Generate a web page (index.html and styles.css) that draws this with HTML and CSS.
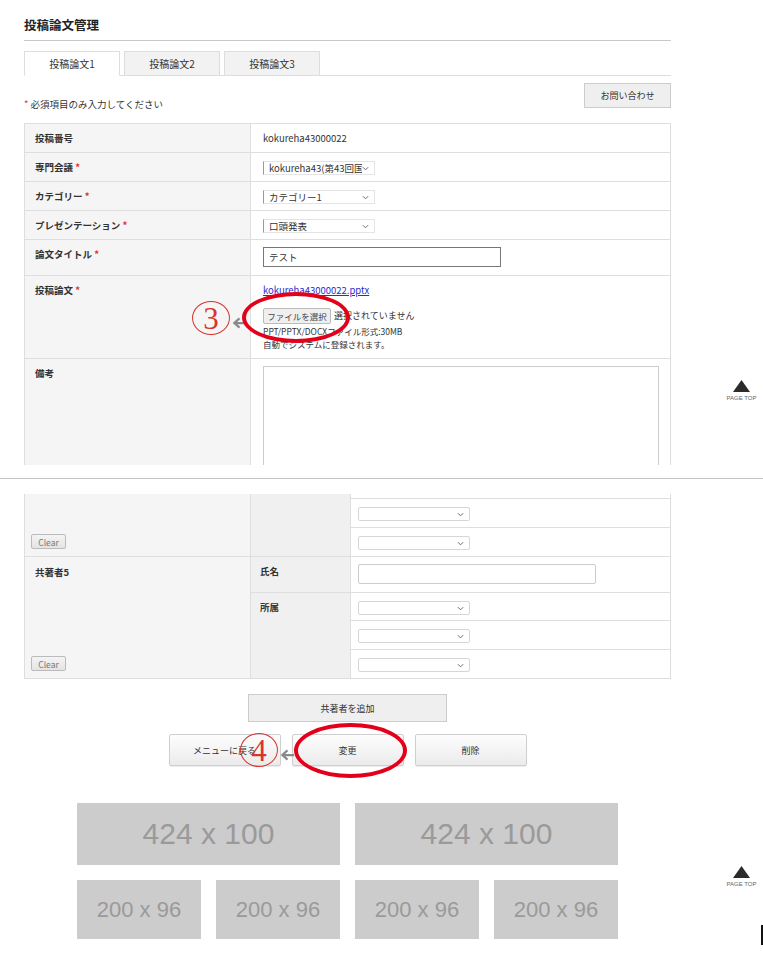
FILE: index.html
```html
<!DOCTYPE html>
<html lang="ja">
<head>
  <meta charset="UTF-8">
  <meta name="viewport" content="width=device-width, initial-scale=1.0">
  <title>投稿論文管理</title>
  <link rel="stylesheet" href="styles.css">
</head>
<body>
  <!-- Screenshot 1: top of the form -->
  <section class="shot shot-top">
    <div class="page">
      <h1>投稿論文管理</h1>

      <ul class="tabs">
        <li class="tab active">投稿論文1</li>
        <li class="tab">投稿論文2</li>
        <li class="tab">投稿論文3</li>
      </ul>

      <div class="form-head">
        <p class="note"><span class="req">*</span> 必須項目のみ入力してください</p>
        <button class="btn btn-contact">お問い合わせ</button>
      </div>

      <div class="form-grid">
        <div class="label">投稿番号</div>
        <div class="value">kokureha43000022</div>

        <div class="label">専門会議 <span class="req">*</span></div>
        <div class="value">
          <span class="select select-top"><span class="select-text">kokureha43(第43回国際</span><svg class="caret" viewBox="0 0 8 5"><path d="M1 1l3 3 3-3"/></svg></span>
        </div>

        <div class="label">カテゴリー <span class="req">*</span></div>
        <div class="value">
          <span class="select select-top"><span class="select-text">カテゴリー1</span><svg class="caret" viewBox="0 0 8 5"><path d="M1 1l3 3 3-3"/></svg></span>
        </div>

        <div class="label">プレゼンテーション <span class="req">*</span></div>
        <div class="value">
          <span class="select select-top"><span class="select-text">口頭発表</span><svg class="caret" viewBox="0 0 8 5"><path d="M1 1l3 3 3-3"/></svg></span>
        </div>

        <div class="label">論文タイトル <span class="req">*</span></div>
        <div class="value value-input">
          <input class="text-input" type="text" value="テスト">
        </div>

        <div class="label">投稿論文 <span class="req">*</span></div>
        <div class="value">
          <a class="file-link" href="#">kokureha43000022.pptx</a>
          <div class="file-row">
            <button class="btn btn-file">ファイルを選択</button>
            <span>選択されていません</span>
          </div>
          <p class="hint">PPT/PPTX/DOCXファイル形式:30MB</p>
          <p class="hint">自動でシステムに登録されます。</p>
        </div>

        <div class="label">備考</div>
        <div class="value value-input">
          <textarea class="memo"></textarea>
        </div>
      </div>
    </div>

    <a class="page-top page-top-1" href="#">
      <svg viewBox="0 0 17 12"><path d="M8.5 0L17 12H0z"/></svg>
      <span>PAGE TOP</span>
    </a>

    <div class="callout callout-3">
      <span class="circled">3</span>
      <svg class="arrow" viewBox="0 0 16 14"><path d="M8 2L2.5 7L8 12M2.5 7H15"/></svg>
    </div>
    <span class="ring ring-3"></span>
  </section>

  <div class="shot-gap"></div>

  <!-- Screenshot 2: end of the co-author list -->
  <section class="shot shot-bottom">
    <div class="page">
      <div class="author-grid">
        <div class="a-left a-left-4">
          <button class="btn btn-clear">Clear</button>
        </div>
        <div class="a-mid a-mid-4"></div>
        <div class="a-right a-cut"></div>
        <div class="a-right">
          <span class="select"><span class="select-text"></span><svg class="caret" viewBox="0 0 8 5"><path d="M1 1l3 3 3-3"/></svg></span>
        </div>
        <div class="a-right">
          <span class="select"><span class="select-text"></span><svg class="caret" viewBox="0 0 8 5"><path d="M1 1l3 3 3-3"/></svg></span>
        </div>

        <div class="a-left a-left-5">
          <span class="a-title">共著者5</span>
          <button class="btn btn-clear">Clear</button>
        </div>
        <div class="a-mid">氏名</div>
        <div class="a-right a-name">
          <input class="name-input" type="text">
        </div>
        <div class="a-mid a-mid-aff">所属</div>
        <div class="a-right">
          <span class="select"><span class="select-text"></span><svg class="caret" viewBox="0 0 8 5"><path d="M1 1l3 3 3-3"/></svg></span>
        </div>
        <div class="a-right">
          <span class="select"><span class="select-text"></span><svg class="caret" viewBox="0 0 8 5"><path d="M1 1l3 3 3-3"/></svg></span>
        </div>
        <div class="a-right">
          <span class="select"><span class="select-text"></span><svg class="caret" viewBox="0 0 8 5"><path d="M1 1l3 3 3-3"/></svg></span>
        </div>
      </div>

      <div class="add-row">
        <button class="btn btn-add">共著者を追加</button>
      </div>

      <div class="actions">
        <button class="btn btn-action">メニューに戻る</button>
        <button class="btn btn-action">変更</button>
        <button class="btn btn-action">削除</button>
      </div>

      <div class="banners">
        <div class="banner banner-lg">424 x 100</div>
        <div class="banner banner-lg">424 x 100</div>
        <div class="banner banner-sm">200 x 96</div>
        <div class="banner banner-sm">200 x 96</div>
        <div class="banner banner-sm">200 x 96</div>
        <div class="banner banner-sm">200 x 96</div>
      </div>
    </div>

    <a class="page-top page-top-2" href="#">
      <svg viewBox="0 0 17 12"><path d="M8.5 0L17 12H0z"/></svg>
      <span>PAGE TOP</span>
    </a>

    <div class="callout callout-4">
      <span class="circled">4</span>
      <svg class="arrow" viewBox="0 0 16 14"><path d="M8 2L2.5 7L8 12M2.5 7H15"/></svg>
    </div>
    <span class="ring ring-4"></span>
    <span class="cursor-bar"></span>
  </section>
</body>
</html>
```

FILE: styles.css
```css
body {
  margin: 0;
  font-family: "Noto Sans CJK JP", "Noto Sans", sans-serif;
  font-size: 9.5px;
  line-height: 12px;
  color: #333;
  background: #fff;
}
p {
  margin: 0;
}
.shot {
  position: relative;
  overflow: hidden;
}
.shot-top {
  height: 465px;
}
.shot-gap {
  height: 13px;
  border-bottom: 1px solid #c4c4c4;
}
.shot-bottom {
  height: 474px;
}
.page {
  width: 647px;
  margin-left: 24px;
}
h1 {
  margin: 0;
  padding-top: 17px;
  padding-bottom: 7px;
  font-size: 12.5px;
  line-height: 16px;
  font-weight: bold;
  color: #222;
  border-bottom: 1px solid #c8c8c8;
}
.req {
  color: #e0302c;
}

/* tabs */
.tabs {
  display: flex;
  gap: 4px;
  margin: 10px 0 0;
  padding: 0;
  list-style: none;
  border-bottom: 1px solid #ddd;
}
.tab {
  box-sizing: border-box;
  width: 96px;
  height: 25px;
  margin-bottom: -1px;
  border: 1px solid #ddd;
  background: #f2f2f2;
  text-align: center;
  font-size: 10px;
  line-height: 24px;
  color: #333;
}
.tab.active {
  background: #fff;
  border-bottom-color: #fff;
}

/* buttons */
.btn {
  font-family: inherit;
  color: #333;
  background: #efefef;
  border: 1px solid #ccc;
  padding: 0;
  cursor: pointer;
}
.form-head {
  display: flex;
  justify-content: space-between;
  margin-top: 7px;
}
.note {
  align-self: flex-end;
  margin-bottom: -2px;
  font-size: 9.5px;
}
.btn-contact {
  width: 87px;
  height: 25px;
  font-size: 9px;
}

/* main form */
.form-grid {
  display: grid;
  grid-template-columns: 225px 419px;
  grid-template-rows: 28px 28px 28px 28px 35px 82px 120px;
  gap: 1px;
  padding: 1px;
  margin-top: 15px;
  background: #dedede;
}
.label {
  background: #f5f5f5;
  padding: 8px 10px 0;
  font-weight: bold;
  color: #333;
}
.value {
  background: #fff;
  padding: 8px 12px 0;
}
.value-input {
  padding-top: 7px;
}
.select {
  box-sizing: border-box;
  display: flex;
  align-items: center;
  width: 112px;
  height: 14px;
  border: 1px solid #d6d6d6;
  border-radius: 2px;
  background: #fff;
}
.select-top {
  border-color: #e4e4e4;
  border-left-color: #999;
  border-radius: 0;
}
.select-text {
  flex: 1;
  overflow: hidden;
  white-space: nowrap;
  padding-left: 5px;
  line-height: 12px;
}
.caret {
  width: 7px;
  height: 5px;
  margin-right: 5px;
  fill: none;
  stroke: #666;
  stroke-width: 1.1;
}
.text-input {
  box-sizing: border-box;
  width: 238px;
  height: 20px;
  padding: 0 5px;
  border: 1px solid #777;
  font-family: inherit;
  font-size: 9.5px;
  color: #333;
}
.file-link {
  display: block;
  width: max-content;
  color: #2c2cd0;
  text-decoration: underline;
}
.file-row {
  display: flex;
  align-items: center;
  gap: 3px;
  margin-top: 12px;
  font-size: 9px;
}
.btn-file {
  width: 68px;
  height: 16px;
  font-size: 8.5px;
  border-color: #bbb;
  border-radius: 2px;
  color: #444;
}
.hint {
  font-size: 8.5px;
  line-height: 13px;
  margin-top: 1px;
}
.hint + .hint {
  margin-top: 0;
}
.memo {
  box-sizing: border-box;
  display: block;
  width: 396px;
  height: 120px;
  border: 1px solid #ccc;
  resize: none;
}

/* co-author table */
.author-grid {
  display: grid;
  grid-template-columns: 225px 99px 319px;
  grid-template-rows: 4px 28px 28px 35px 27px 28px 28px;
  gap: 1px;
  padding: 0 1px 1px;
  margin-top: 15px;
  background: #dedede;
}
.a-left {
  grid-column: 1;
  display: flex;
  flex-direction: column;
  align-items: flex-start;
  background: #f5f5f5;
  padding: 9px 0 7px 6px;
}
.a-left-4 {
  grid-row: 1 / 4;
}
.a-left-5 {
  grid-row: 4 / 8;
}
.a-title {
  padding-left: 4px;
  font-weight: bold;
}
.a-mid {
  grid-column: 2;
  background: #f0f0f0;
  padding: 8px 9px 0;
  font-weight: bold;
}
.a-mid-4 {
  grid-row: 1 / 4;
}
.a-mid-aff {
  grid-row: 5 / 8;
}
.a-right {
  grid-column: 3;
  background: #fff;
  padding: 8px 7px 0;
}
.a-cut {
  padding: 0;
}
.a-name {
  padding-top: 7px;
}
.name-input {
  box-sizing: border-box;
  width: 238px;
  height: 20px;
  border: 1px solid #ccc;
  border-radius: 2px;
}
.btn-clear {
  width: 35px;
  height: 15px;
  margin-top: auto;
  font-size: 8.5px;
  color: #777;
  border-color: #bbb;
  border-radius: 2px;
  background: linear-gradient(#f4f4f4, #e4e4e4);
}

/* bottom buttons */
.add-row {
  display: flex;
  justify-content: center;
  margin-top: 15px;
}
.btn-add {
  width: 199px;
  height: 28px;
  font-size: 9px;
  background: #efefef;
}
.actions {
  display: flex;
  justify-content: center;
  gap: 11px;
  margin-top: 12px;
}
.btn-action {
  width: 112px;
  height: 32px;
  font-size: 9px;
  border-color: #cfcfcf;
  border-radius: 2px;
  background: linear-gradient(#fdfdfd, #ebebeb);
  box-shadow: 0 1px 1px rgba(0, 0, 0, 0.08);
}

/* banners */
.banners {
  display: grid;
  grid-template-columns: repeat(4, 124px);
  gap: 15px;
  justify-content: center;
  margin-top: 37px;
}
.banner {
  display: flex;
  align-items: center;
  justify-content: center;
  background: #cccccc;
  color: #9a9a9a;
  font-family: "Liberation Sans", Arial, sans-serif;
}
.banner-lg {
  grid-column: span 2;
  height: 62px;
  font-size: 30px;
}
.banner-sm {
  height: 59px;
  font-size: 22px;
}

/* floating page-top link */
.page-top {
  position: absolute;
  left: 725px;
  width: 33px;
  display: flex;
  flex-direction: column;
  align-items: center;
  text-decoration: none;
  color: #666;
}
.page-top svg {
  width: 17px;
  height: 12px;
  fill: #2b2b2b;
}
.page-top span {
  margin-top: 2px;
  font-family: "Liberation Sans", Arial, sans-serif;
  font-size: 6px;
  line-height: 8px;
  white-space: nowrap;
}
.page-top-1 {
  top: 380px;
}
.page-top-2 {
  top: 387px;
}

/* annotations drawn over the screenshots */
.callout {
  position: absolute;
  display: flex;
  align-items: center;
}
.callout-3 {
  left: 192px;
  top: 301px;
}
.callout-4 {
  left: 240px;
  top: 254px;
}
.circled {
  box-sizing: border-box;
  display: flex;
  align-items: center;
  justify-content: center;
  width: 38px;
  height: 34px;
  border: 1.3px solid #d8352f;
  border-radius: 50%;
  font-family: "Liberation Serif", "Times New Roman", serif;
  font-size: 31px;
  line-height: 1;
  color: #d8352f;
}
.arrow {
  width: 15px;
  height: 14px;
  margin-left: 2px;
  margin-top: 10px;
  fill: none;
  stroke: #8a8a8a;
  stroke-width: 2.4;
}
.ring {
  position: absolute;
  box-sizing: border-box;
  border: 4px solid #e3001b;
  border-radius: 50%;
}
.ring-3 {
  left: 242px;
  top: 292px;
  width: 108px;
  height: 51px;
}
.ring-4 {
  left: 294px;
  top: 244px;
  width: 113px;
  height: 55px;
}
.cursor-bar {
  position: absolute;
  left: 761px;
  top: 446px;
  width: 2px;
  height: 20px;
  background: #111;
}
```
